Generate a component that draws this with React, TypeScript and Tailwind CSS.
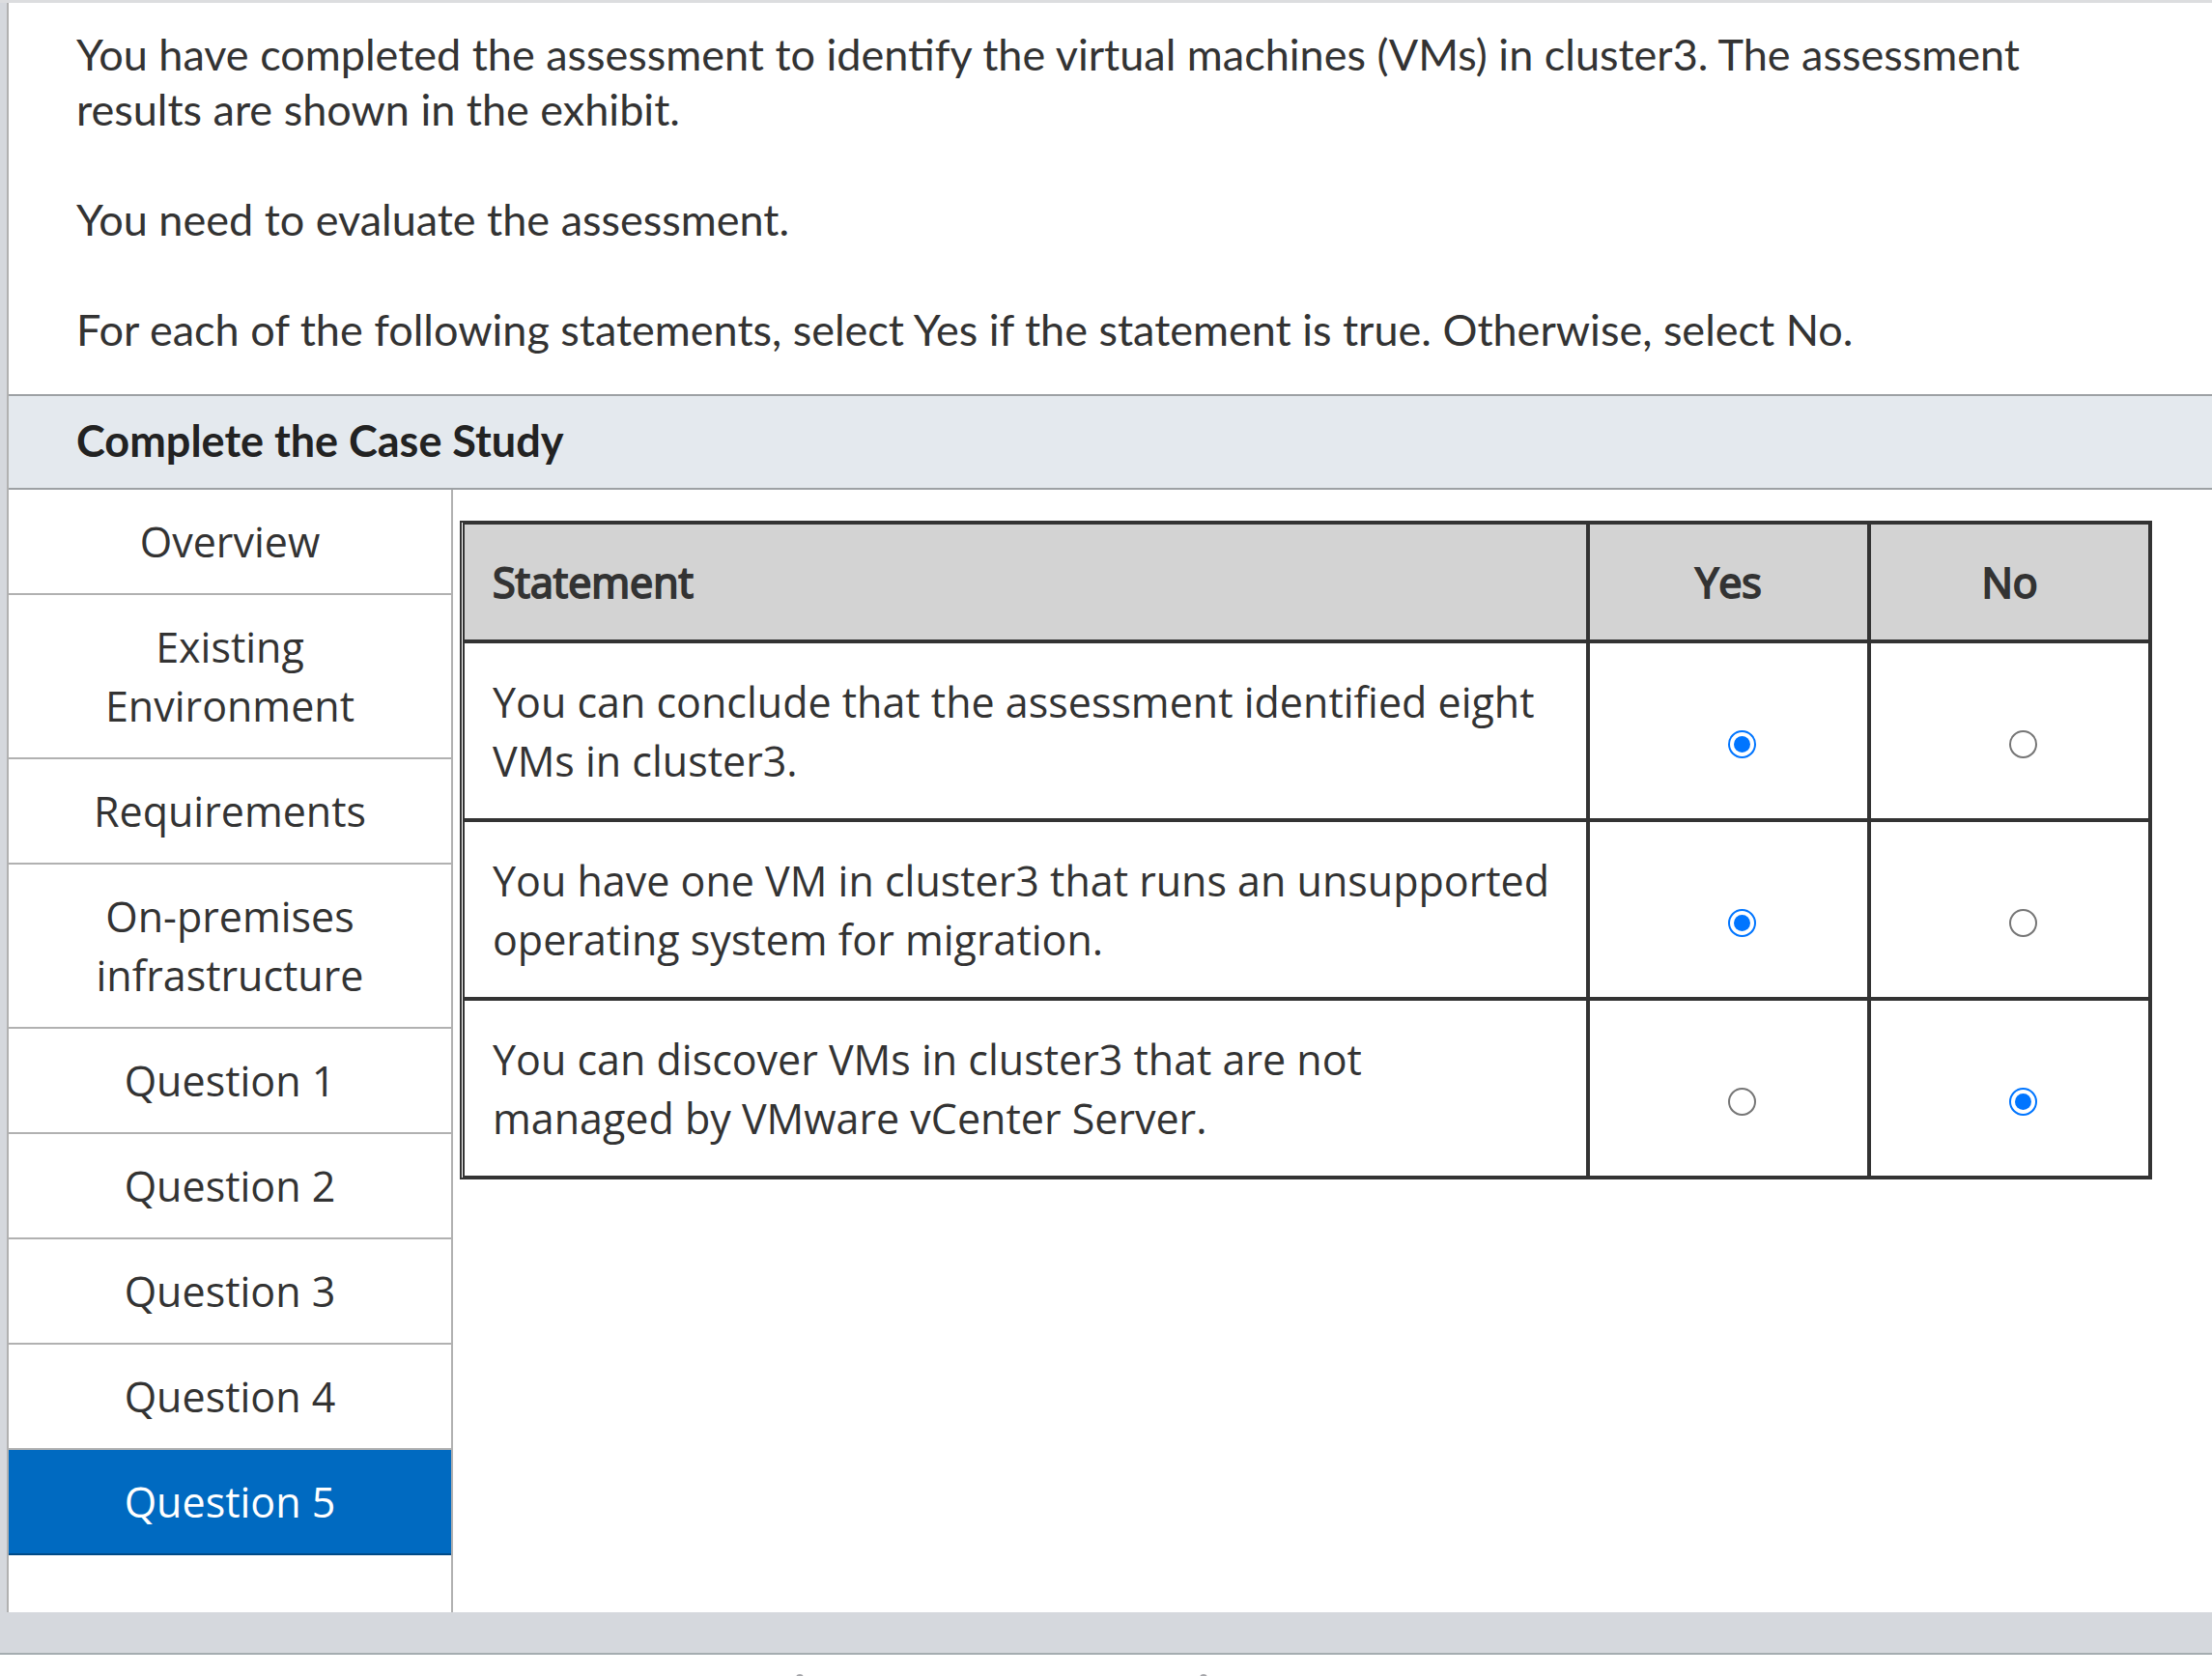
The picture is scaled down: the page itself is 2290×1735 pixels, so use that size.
import { useState } from "react";

const sections = [
  "Overview",
  "Existing Environment",
  "Requirements",
  "On-premises infrastructure",
  "Question 1",
  "Question 2",
  "Question 3",
  "Question 4",
  "Question 5",
];

const statements = [
  "You can conclude that the assessment identified eight VMs in cluster3.",
  "You have one VM in cluster3 that runs an unsupported operating system for migration.",
  "You can discover VMs in cluster3 that are not managed by VMware vCenter Server.",
];

type Answer = "Yes" | "No";

function Sidebar({ active, onSelect }: { active: string; onSelect: (s: string) => void }) {
  return (
    <nav className="w-[460px] shrink-0 border-r-2 border-[#b1b1b1]">
      {sections.map((s) => (
        <button
          key={s}
          type="button"
          onClick={() => onSelect(s)}
          className={
            s === active
              ? "block w-full border-b-2 border-[#004a87] bg-[#006ac1] px-16 py-[23px] text-white"
              : "block w-full border-b-2 border-[#b1b1b1] px-16 py-[23px]"
          }
        >
          {s}
        </button>
      ))}
    </nav>
  );
}

function AnswerCell({
  row,
  value,
  selected,
  last,
  onSelect,
}: {
  row: number;
  value: Answer;
  selected: boolean;
  last: boolean;
  onSelect: () => void;
}) {
  return (
    <td className={last ? "border-r-4 border-b-2 border-[#333]" : "border-r-4 border-b-4 border-[#333]"}>
      <div className="flex items-center justify-center pt-7 pl-7">
        <input
          type="radio"
          name={`statement-${row}`}
          aria-label={`${value}: ${statements[row]}`}
          checked={selected}
          onChange={onSelect}
          className="m-0 size-[29px] appearance-none rounded-full border-2 border-[#767676] bg-white p-[4px] before:block before:size-full before:rounded-full checked:border-[#0075ff] checked:before:bg-[#0075ff]"
        />
      </div>
    </td>
  );
}

export default function App() {
  const [active, setActive] = useState("Question 5");
  const [answers, setAnswers] = useState<Answer[]>(["Yes", "Yes", "No"]);
  const choose = (row: number, value: Answer) =>
    setAnswers((prev) => prev.map((a, i) => (i === row ? value : a)));

  return (
    <div className="h-screen overflow-hidden bg-white font-['Open_Sans',sans-serif] text-[43px] leading-[61px] text-[#333]">
      <div className="border-b-2 border-[#a5adb0] bg-[#d5d8dd] pb-[42px]">
        <div className="h-[3px] bg-[#dcdddf]" />
        <main className="ml-[7px] border-l-2 border-[#b1b1b1] bg-white">
          <section className="px-[70px] pt-[25px] pb-[38px] font-[Lato,sans-serif] text-[45px] leading-[57px]">
            <p>
              You have completed the assessment to identify the virtual machines (VMs) in cluster3. The assessment
              <br />
              results are shown in the exhibit.
            </p>
            <p className="mt-[57px]">You need to evaluate the assessment.</p>
            <p className="mt-[57px]">
              For each of the following statements, select Yes if the statement is true. Otherwise, select No.
            </p>
          </section>
          <h2 className="border-y-2 border-[#9da1a4] bg-[#e4e9ee] px-[70px] pt-4 pb-[18px] font-[Lato,sans-serif] text-[45px] font-bold text-[#222]">
            Complete the Case Study
          </h2>
          <div className="flex">
            <Sidebar active={active} onSelect={setActive} />
            <div className="min-w-0 grow pt-8 pr-[62px] pb-[448px] pl-[7px]">
              <div className="border-y-2 border-l-2 border-[#333] pl-px">
                <table className="w-full table-fixed border-separate border-spacing-0">
                  <colgroup>
                    <col />
                    <col className="w-[291px]" />
                    <col className="w-[291px]" />
                  </colgroup>
                  <thead className="[-webkit-text-stroke:2px_#333]">
                    <tr className="bg-[#d3d3d3]">
                      <th scope="col" className="border-t-2 border-r-4 border-b-4 border-l-2 border-[#333] px-[29px] py-[29px] text-left font-normal">
                        Statement
                      </th>
                      <th scope="col" className="border-t-2 border-r-4 border-b-4 border-[#333] font-normal">
                        Yes
                      </th>
                      <th scope="col" className="border-t-2 border-r-4 border-b-4 border-[#333] font-normal">
                        No
                      </th>
                    </tr>
                  </thead>
                  <tbody>
                    {statements.map((text, i) => {
                      const last = i === statements.length - 1;
                      return (
                        <tr key={text}>
                          <td
                            className={
                              last
                                ? "border-r-4 border-b-2 border-l-2 border-[#333] pt-[30px] pr-9 pb-[29px] pl-[29px]"
                                : "border-r-4 border-b-4 border-l-2 border-[#333] pt-[30px] pr-9 pb-[29px] pl-[29px]"
                            }
                          >
                            {text}
                          </td>
                          <AnswerCell row={i} value="Yes" last={last} selected={answers[i] === "Yes"} onSelect={() => choose(i, "Yes")} />
                          <AnswerCell row={i} value="No" last={last} selected={answers[i] === "No"} onSelect={() => choose(i, "No")} />
                        </tr>
                      );
                    })}
                  </tbody>
                </table>
              </div>
            </div>
          </div>
        </main>
      </div>
      <div aria-hidden="true" className="flex gap-[410px] pt-5 pl-[824px]">
        <span className="size-2 rounded-full bg-[#a3a4a8]" />
        <span className="size-2 rounded-full bg-[#a3a4a8]" />
      </div>
    </div>
  );
}
